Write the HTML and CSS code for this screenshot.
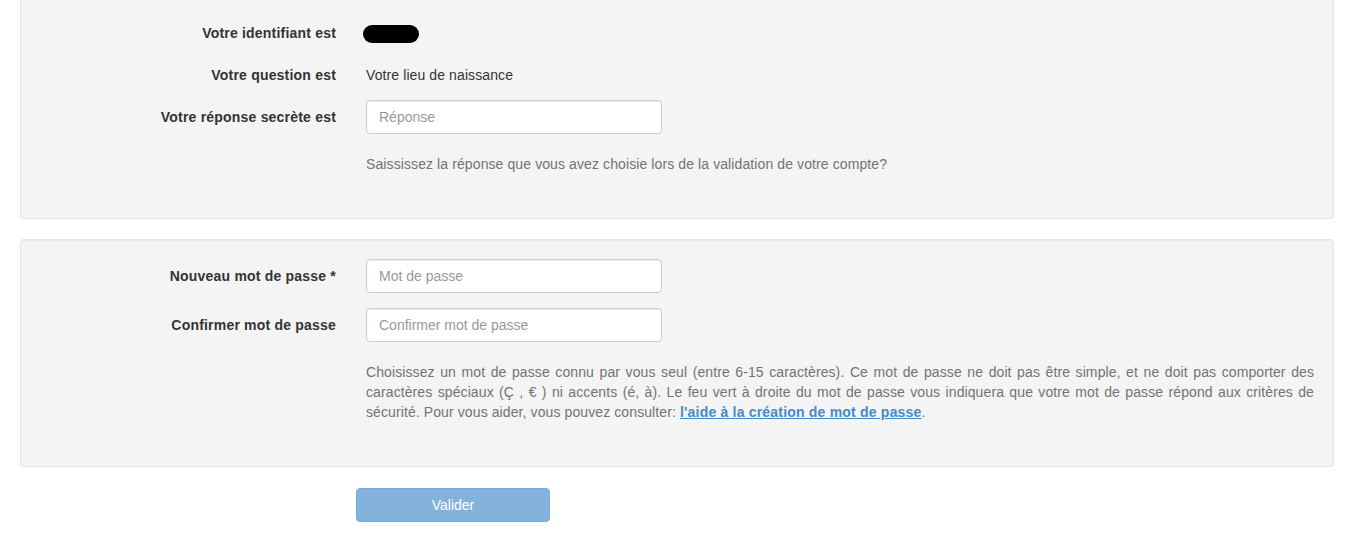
FILE: index.html
```html
<!DOCTYPE html>
<html lang="fr">
<head>
<meta charset="utf-8">
<title>Réinitialisation du mot de passe</title>
<link rel="stylesheet" href="styles.css">
</head>
<body>
<div class="container">
  <form class="form">
    <div class="well well-first">
      <div class="row static-row">
        <label class="col-label">Votre identifiant est</label>
        <div class="col-field"><span class="redacted"></span></div>
      </div>
      <div class="row static-row">
        <label class="col-label">Votre question est</label>
        <div class="col-field"><span class="static-text">Votre lieu de naissance</span></div>
      </div>
      <div class="row">
        <label class="col-label" for="rep">Votre réponse secrète est</label>
        <div class="col-field"><input id="rep" class="form-control" type="text" placeholder="Réponse"></div>
      </div>
      <div class="row">
        <p class="help-block">Saississez la réponse que vous avez choisie lors de la validation de votre compte?</p>
      </div>
    </div>

    <div class="well">
      <div class="row">
        <label class="col-label" for="pw">Nouveau mot de passe *</label>
        <div class="col-field"><input id="pw" class="form-control" type="password" placeholder="Mot de passe"></div>
      </div>
      <div class="row">
        <label class="col-label" for="pw2">Confirmer mot de passe</label>
        <div class="col-field"><input id="pw2" class="form-control" type="password" placeholder="Confirmer mot de passe"></div>
      </div>
      <div class="row">
        <p class="help-block justify">Choisissez un mot de passe connu par vous seul (entre 6-15 caractères). Ce mot de passe ne doit pas être simple, et ne doit pas comporter des caractères spéciaux (Ç , € ) ni accents (é, à). Le feu vert à droite du mot de passe vous indiquera que votre mot de passe répond aux critères de sécurité. Pour vous aider, vous pouvez consulter: <a href="#" class="help-link">l'aide à la création de mot de passe</a>.</p>
      </div>
    </div>

    <div class="row btn-row">
      <div class="col-btn"><button type="submit" class="btn" disabled>Valider</button></div>
    </div>
  </form>
</div>
</body>
</html>
```

FILE: styles.css
```css
* { box-sizing: border-box; }

html, body {
  margin: 0;
  padding: 0;
  background: #fff;
}

body {
  font-family: "Liberation Sans", Arial, Helvetica, sans-serif;
  font-size: 14px;
  line-height: 20px;
  color: #333;
}

.container {
  padding: 0 35px 0 20px;
}

.form {
  margin: 0;
}

.well {
  background: #f4f4f4;
  border: 1px solid #e3e3e3;
  border-radius: 4px;
  padding: 19px;
  margin-bottom: 20px;
  box-shadow: inset 0 1px 1px rgba(0, 0, 0, 0.05);
}

.well-first {
  margin-top: -4px;
}

.row {
  display: grid;
  grid-template-columns: 25% 25% 50%;
  margin: 0 -15px 15px;
}

.col-label {
  grid-column: 1;
  padding: 7px 15px 0;
  text-align: right;
  font-weight: bold;
  letter-spacing: 0.2px;
  color: #333;
}

.col-field {
  grid-column: 2;
  padding: 0 15px;
}

.static-row .col-field {
  padding-top: 7px;
}

.static-text {
  color: #333;
  letter-spacing: 0.1px;
}

.redacted {
  display: block;
  width: 56px;
  height: 18px;
  margin-left: -3px;
  margin-top: 2px;
  background: #000;
  border-radius: 9px;
}

.form-control {
  display: block;
  width: 100%;
  height: 34px;
  padding: 6px 12px;
  font-family: inherit;
  font-size: 14px;
  line-height: 20px;
  color: #555;
  background: #fff;
  border: 1px solid #ccc;
  border-radius: 4px;
  box-shadow: inset 0 1px 1px rgba(0, 0, 0, 0.075);
  outline: none;
}

.form-control::placeholder {
  color: #999;
}

.help-block {
  grid-column: 2 / 4;
  margin: 5px 0 10px;
  padding: 0 15px;
  color: #737373;
  letter-spacing: 0.1px;
}

.justify {
  text-align: justify;
}

.help-link {
  color: #428bca;
  font-weight: bold;
  letter-spacing: 0.2px;
  text-decoration: underline;
}

.btn-row {
  grid-template-columns: 25% 16.6667% 1fr;
  padding-top: 1px;
  margin-bottom: 0;
}

.col-btn {
  grid-column: 2;
  padding: 0 15px;
}

.btn {
  display: block;
  width: 100%;
  height: 34px;
  padding: 6px 12px;
  font-family: inherit;
  font-size: 14px;
  line-height: 20px;
  color: #fff;
  background: #428bca;
  border: 1px solid #357ebd;
  border-radius: 4px;
  opacity: 0.65;
  cursor: not-allowed;
}
```
